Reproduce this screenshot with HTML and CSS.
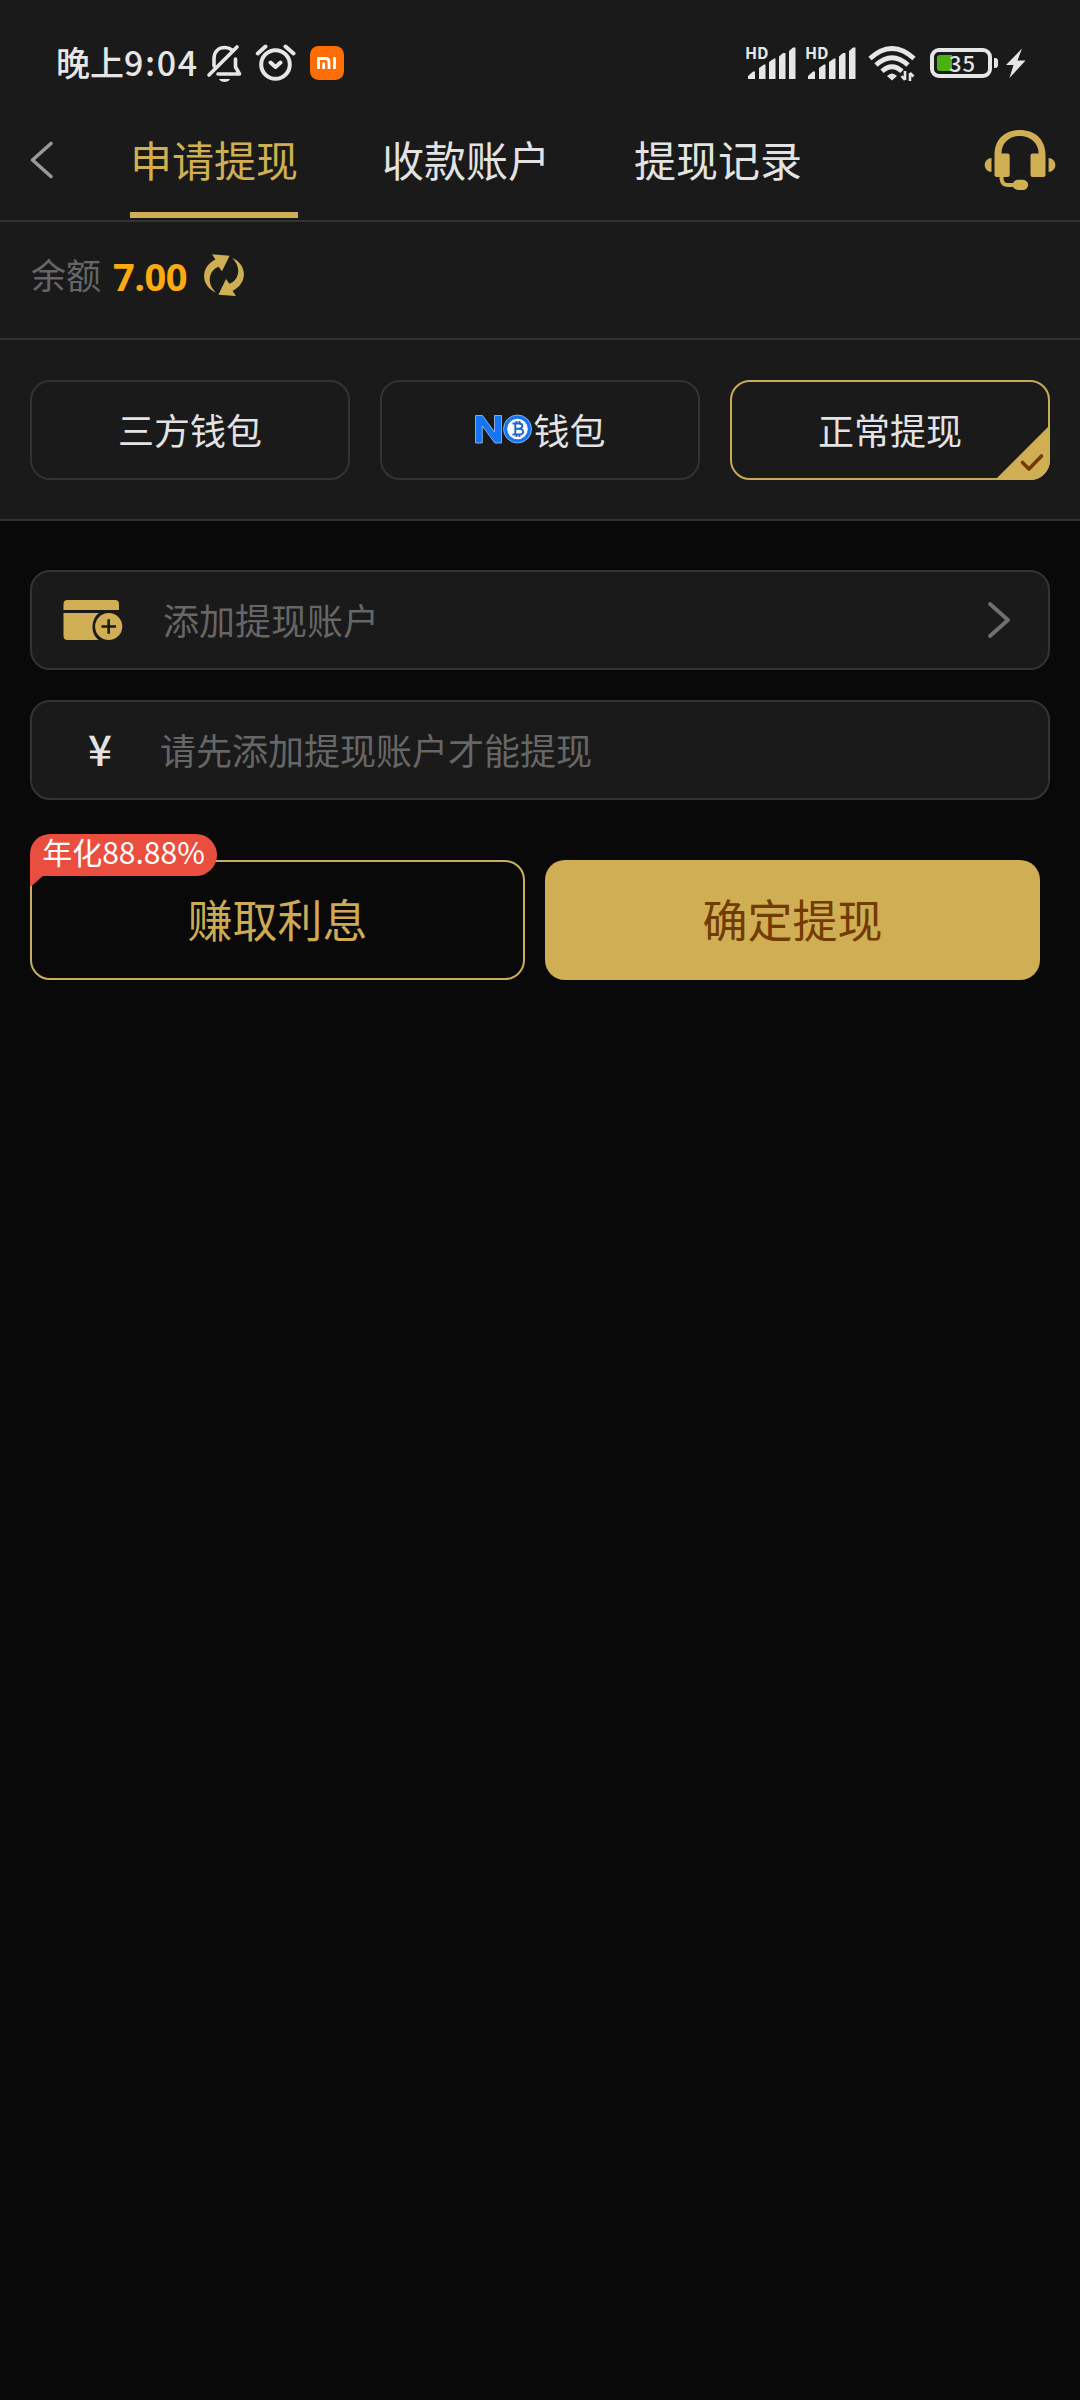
FILE: index.html
```html
<!DOCTYPE html>
<html lang="zh-CN">
<head>
<meta charset="utf-8">
<title>申请提现</title>
<link rel="stylesheet" href="styles.css">
</head>
<body>
<div class="top">
  <div class="status">
    <div class="status-left">
      <span class="clock">晚上<span class="clock-num">9:04</span></span>
      <svg class="bell" width="36" height="40" viewBox="206 43 36 40" fill="none" stroke="#e6e6e6" stroke-width="3.600" stroke-linecap="round" stroke-linejoin="round">
        <path d="M214 66V59C214 51 219 47.500 225 47.500C228 47.500 230 48.500 232 50M235.500 59V67L239.500 74H218M209 75L237 47"/>
        <path d="M219 79H230C228.500 83 220.500 83 219 79Z" fill="#e6e6e6" stroke="none"/>
      </svg>
      <svg class="alarm" width="42" height="40" viewBox="255 43 42 40" fill="none" stroke="#e6e6e6" stroke-width="4" stroke-linecap="round" stroke-linejoin="round">
        <circle cx="275.500" cy="64.500" r="14.300"/><path d="M270.500 62.500L275.500 67L280.500 62.500M257.800 53.500L265.500 46.500M293.500 53.500L285.500 46.500"/>
      </svg>
      <svg class="mi" width="34" height="34" viewBox="0 0 34 34"><rect width="34" height="34" rx="8.500" fill="#ff6e05"/><path d="M8.500 23V12.500H15.500Q19 12.500 19 16V23M13.700 16.500V23M24.500 11V23" fill="none" stroke="#fff" stroke-width="2.800"/></svg>
    </div>
    <div class="status-right">
      <div class="signal"><span class="hd">HD</span><svg width="50" height="33" viewBox="0 0 50 33" fill="#e6e6e6"><path d="M2 33V30L7 25.500H9V33ZM13 33V22L18 18.500H19.500V33ZM23 33V16L28 12.500H29.500V33ZM33 33V10.500L37 7H39.500V33ZM43 33V5L47 1.500H49.500V33Z"/></svg></div>
      <div class="signal"><span class="hd">HD</span><svg width="50" height="33" viewBox="0 0 50 33" fill="#e6e6e6"><path d="M2 33V30L7 25.500H9V33ZM13 33V22L18 18.500H19.500V33ZM23 33V16L28 12.500H29.500V33ZM33 33V10.500L37 7H39.500V33ZM43 33V5L47 1.500H49.500V33Z"/></svg></div>
      <svg class="wifi" width="48" height="36" viewBox="868 46 48 36" fill="none" stroke="#e6e6e6" stroke-width="4.800">
        <path d="M870 58.500Q892 38.500 914 58.500M876 65Q892 50.500 908 65M882 71.300Q892 62 902 71.300"/>
        <path d="M887 76Q892 71 897 76L892 80.500Z" fill="#e6e6e6" stroke="none"/>
        <path d="M905 71V80M901.500 76L905 80M910 81V73M910 73L913.500 76.500" stroke-width="2.600"/>
      </svg>
      <div class="battery"><span class="battery-fill"></span><span class="battery-num">35</span></div>
      <span class="nub"></span>
      <svg class="bolt" width="20" height="30" viewBox="1006 48 20 30" fill="#e6e6e6"><path d="M1022 48.500L1006 65H1013.500L1009.500 78L1025.500 60.500H1017.500Z"/></svg>
    </div>
  </div>
  <nav class="nav">
    <svg class="back" width="26" height="40" viewBox="29 140 26 40" fill="none" stroke="#999" stroke-width="3.600" stroke-linecap="round" stroke-linejoin="round"><path d="M51 143.500L32.500 160L51 176.500"/></svg>
    <div class="tabs">
      <div class="tab tab-active">申请提现</div>
      <div class="tab">收款账户</div>
      <div class="tab">提现记录</div>
    </div>
    <svg class="headset" width="72" height="62" viewBox="984 129 72 62" fill="#d0ae53">
      <path d="M994.500 175V155C994.500 138.500 1006 130 1020 130S1045.500 138.500 1045.500 155V175Q1045.500 177 1043.500 177H1032.500Q1030.500 177 1030.500 175V155.500Q1030.500 153.500 1032.500 153.500H1038.600C1038.600 142.500 1030 136 1020 136S1001.500 142.500 1001.500 153.500H1007.700Q1009.700 153.500 1009.700 155.500V175Q1009.700 177 1007.700 177H1003.500C1003.500 181.500 1005 183 1008 183H1013Q1015 179.700 1018 179.700H1023A5.100 5.100 0 0 1 1023 190H1018Q1015 190 1013 187H1008C1002 187 999.500 183 999.500 177H996.500Q994.500 177 994.500 175Z"/>
      <path d="M991.500 158V172C982.500 171 982.500 159 991.500 158ZM1048.600 158V172C1057.600 171 1057.600 159 1048.600 158Z"/>
    </svg>
  </nav>
  <div class="balance">
    <span class="balance-label">余额</span>
    <span class="balance-value">7.00</span>
    <svg class="refresh" width="42" height="44" viewBox="203 253 42 44" fill="#d0ae53">
      <path d="M212 254.300L229.600 255.700L222 271.300L218.600 266.700C211 269 204.500 281 216 292.700C200.500 286 200 267 215.400 259.500Z"/>
      <path transform="rotate(180 224 275.200)" d="M212 254.300L229.600 255.700L222 271.300L218.600 266.700C211 269 204.500 281 216 292.700C200.500 286 200 267 215.400 259.500Z"/>
    </svg>
  </div>
  <div class="methods">
    <div class="method"><span class="method-text">三方钱包</span></div>
    <div class="method">
      <svg class="no-logo" width="59" height="32" viewBox="474 414 59 32">
        <path d="M475.500 443V415.500H482.500L494.500 432V415.500H501.500V443H494.800L482.300 426V443Z" fill="#1675f5" stroke="#b9d4f8" stroke-width=".7"/>
        <circle cx="517.500" cy="429" r="14" fill="#1675f5" stroke="#b9d4f8" stroke-width=".7"/>
        <circle cx="517.500" cy="429" r="10.300" fill="#fff"/>
        <path d="M512.500 423.500H519C523.500 423.500 523.500 428.500 519 428.700H515.500M519 428.700C524.500 429 524.500 434.500 519 434.500H512.500M515.300 423.500V434.500M516.500 421V423.500M519.500 421V423.500M516.500 434.500V437M519.500 434.500V437" fill="none" stroke="#1e66c4" stroke-width="1.900"/>
      </svg><span class="method-text">钱包</span>
    </div>
    <div class="method method-active"><span class="method-text">正常提现</span>
      <svg class="corner" width="54" height="54" viewBox="996 426 54 54"><path d="M995 480L1050 425V460A20 20 0 0 1 1030 480Z" fill="#d0ae53"/><path d="M1022.500 462.500L1029 469L1041.500 456" fill="none" stroke="#723b00" stroke-width="3.600" stroke-linecap="round" stroke-linejoin="round"/></svg>
    </div>
  </div>
</div>
<main class="form">
  <div class="field">
    <svg class="card-icon" width="60" height="42" viewBox="63 599 60 42" fill="#d0ae53">
      <path d="M63.500 610V604Q63.500 600 67.500 600H115Q119 600 119 604V610ZM63.500 613H99C91 619 90 633 98.500 640H67.500Q63.500 640 63.500 636Z"/>
      <circle cx="108.700" cy="626.500" r="13.600"/><path d="M101.500 626.500H116M108.700 619.300V633.700" stroke="#1a1a1a" stroke-width="2.600"/>
    </svg>
    <span class="field-text">添加提现账户</span>
    <svg class="chevron" width="24" height="40" viewBox="0 0 24 40" fill="none" stroke="#707070" stroke-width="3.800" stroke-linecap="round" stroke-linejoin="round"><path d="M3 4L21 20L3 36"/></svg>
  </div>
  <div class="field field-amount">
    <span class="yen">¥</span>
    <span class="field-text">请先添加提现账户才能提现</span>
  </div>
  <div class="actions">
    <div class="btn btn-outline">赚取利息
      <div class="badge"><svg class="badge-tail" width="14" height="20" viewBox="0 0 14 20"><path d="M0 0H14V9L1.500 20H0Z" fill="#e94e3e"/></svg><span class="badge-text">年化88.88%</span></div>
    </div>
    <div class="btn btn-solid">确定提现</div>
  </div>
</main>
</body>
</html>
```
FILE: styles.css
```css
* { box-sizing: border-box; }
body {
  margin: 0;
  width: 1080px;
  height: 2400px;
  background: #090909;
  color: #e3e3e3;
  font-family: "Noto Sans CJK SC", sans-serif;
  overflow: hidden;
}
svg { display: block; flex: none; }
.top { background: #1a1a1a; height: 521px; border-bottom: 2px solid #333; }
.status { height: 100px; display: flex; justify-content: space-between; padding: 0 54px 0 56px; }
.status-left, .status-right { display: flex; align-items: flex-start; }
.clock { font-size: 34px; font-weight: 500; line-height: 50px; margin-top: 37px; width: 150px; white-space: nowrap; color: #e6e6e6; }
.clock-num { letter-spacing: 1.6px; }
.bell { margin-top: 43px; }
.alarm { margin: 43px 13px 0; }
.mi { margin-top: 46px; }
.signal { position: relative; width: 60px; padding-top: 46px; }
.hd { position: absolute; left: -1px; top: 40px; font: 700 16px/24px "Noto Sans CJK SC", sans-serif; color: #e6e6e6; }
.wifi { margin: 46px 14px 0 2px; }
.battery { width: 62px; height: 30px; margin-top: 48px; border: 4px solid #e6e6e6; border-radius: 9px; position: relative; }
.battery-fill { position: absolute; left: 3px; top: 3px; width: 15px; height: 16px; border-radius: 3px 0 0 3px; background: #4cb010; }
.battery-num { position: absolute; left: 15px; top: -2px; font-size: 22px; line-height: 24px; font-weight: 500; letter-spacing: 1px; }
.nub { width: 4px; height: 10px; margin: 58px 8px 0 2px; border-radius: 0 3px 3px 0; background: #e6e6e6; }
.bolt { margin-top: 48px; }
.nav { height: 122px; display: flex; align-items: flex-start; border-bottom: 2px solid #333; padding-left: 29px; }
.back { margin-top: 40px; }
.tabs { display: flex; gap: 84px; margin-left: 75px; }
.tab { width: 168px; height: 118px; font-size: 42px; line-height: 118px; white-space: nowrap; text-align: center; }
.tab-active { color: #d0ae53; border-bottom: 6px solid #d0ae53; }
.headset { margin: 29px 0 0 182px; }
.balance { height: 118px; display: flex; align-items: flex-start; padding-left: 31px; border-bottom: 2px solid #333; }
.balance-label { font-size: 35px; line-height: 52px; margin-top: 26px; width: 82px; color: #666; }
.balance-value { font-family: "Open Sans", sans-serif; font-size: 38px; line-height: 52px; margin-top: 28px; width: 90px; font-weight: 700; letter-spacing: -.5px; color: #fcaa12; }
.refresh { margin-top: 31px; }
.methods { display: grid; grid-template-columns: repeat(3, 320px); gap: 30px; padding: 40px 30px 0; }
.method { position: relative; height: 100px; border: 2px solid #333; border-radius: 20px; display: flex; align-items: center; justify-content: center; font-size: 36px; line-height: 52px; }
.method-text { padding-bottom: 3px; }
.method-active { border-color: #c9a95a; }
.corner { position: absolute; right: -2px; bottom: -2px; }
.form { padding: 49px 30px 0; }
.field { height: 100px; border: 2px solid #333; border-radius: 20px; background: #1a1a1a; display: flex; align-items: center; padding-left: 31px; font-size: 36px; color: #666; }
.field-text { margin-left: 40px; line-height: 52px; padding-bottom: 3px; }
.chevron { margin-left: auto; margin-right: 37px; }
.field-amount { margin-top: 30px; padding-left: 55px; }
.yen { font-size: 42px; line-height: 60px; width: 26px; padding-bottom: 4px; text-align: center; color: #e3e3e3; font-weight: 500; }
.field-amount .field-text { margin-left: 47px; }
.actions { display: grid; grid-template-columns: 495px 495px; gap: 20px; margin-top: 60px; }
.btn { position: relative; height: 120px; border-radius: 20px; display: flex; align-items: center; justify-content: center; font-size: 45px; line-height: 66px; padding-bottom: 2px; }
.btn-outline { border: 2px solid #c9ae62; color: #cdab55; }
.btn-solid { background: #d0ae53; color: #723b00; }
.badge { position: absolute; left: -2px; top: -28px; width: 187px; height: 42px; background: #e94e3e; border-radius: 20px 21px 21px 0; color: #fff; font-size: 30px; line-height: 38px; white-space: nowrap; text-align: center; }
.badge-tail { position: absolute; left: 0; top: 32px; }
.badge-text { position: relative; top: -2px; }
```
